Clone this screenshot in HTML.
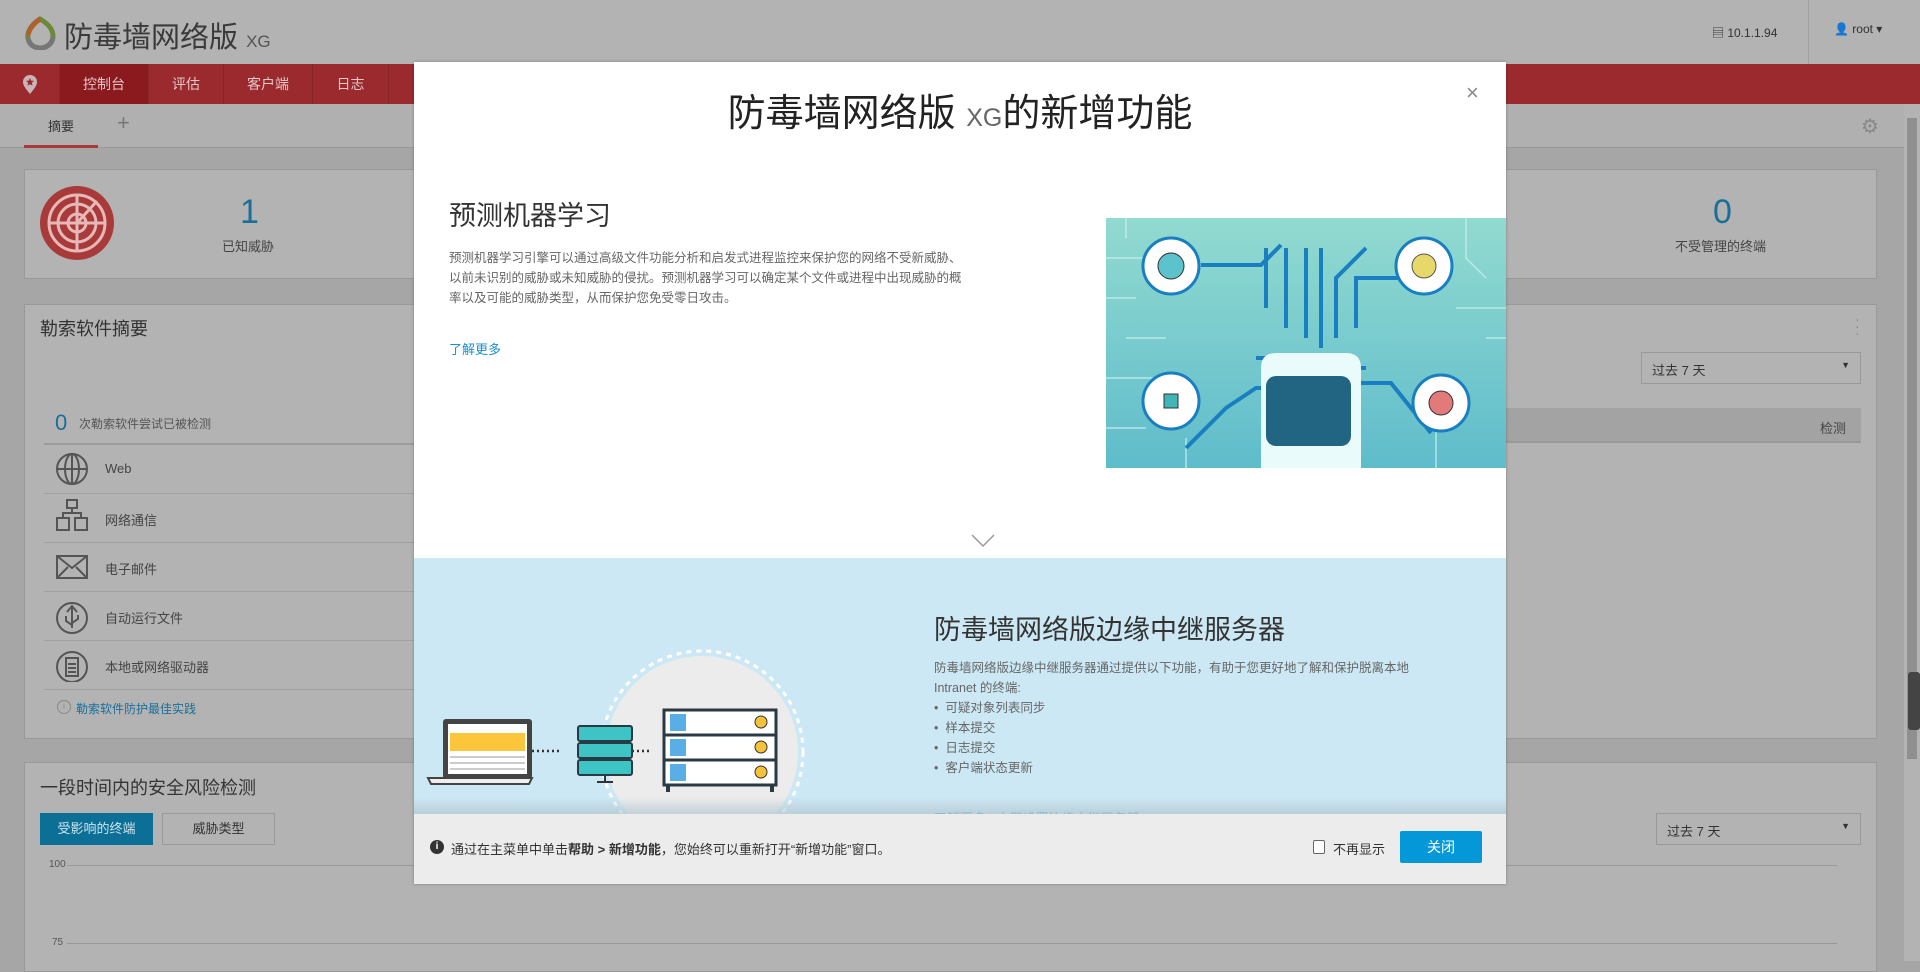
<!DOCTYPE html>
<html><head><meta charset="utf-8"><style>
*{box-sizing:border-box;margin:0;padding:0}
body{width:1920px;height:961px;overflow:hidden;background:#a6a6a6;font-family:"Liberation Sans","Noto Sans CJK SC",sans-serif;color:#3a3a3a;position:relative}
.abs{position:absolute}
.hdr{left:0;top:0;width:1920px;height:64px;background:#b3b3b3}
.nav{left:0;top:64px;width:1920px;height:40px;background:#9b2a2e}
.nav div{position:absolute;top:0;height:40px;line-height:40px;color:#e6c6c6;font-size:14px;text-align:center;border-right:1px solid #8a2428}
.sub{left:0;top:104px;width:1904px;height:44px;background:#b0b0b0;border-bottom:1px solid #9a9a9a}
.card{background:#b3b3b3;border:1px solid #999}
.row{left:44px;width:380px;height:49px;border-top:1px solid #a0a0a0}
.row span{position:absolute;left:61px;top:16px;font-size:13px;color:#444}
.modal{left:414px;top:62px;width:1092px;height:822px;background:#fff;overflow:hidden;box-shadow:0 0 3px rgba(0,0,0,.3)}
.p{font-size:12.5px;color:#666;line-height:20px}
</style></head><body>
<div class="abs hdr"></div>
<svg class="abs" style="left:23px;top:16px" width="34" height="34" viewBox="0 0 34 34"><path d="M17 3 C8 9 4 16 5 22 C6 29 12 32 17 32 C24 32 30 27 30 20 C30 13 24 7 17 3Z" fill="none" stroke="#6a8a3a" stroke-width="5"/><path d="M5 22 C6 29 12 32 17 32 C24 32 29 28 30 21" fill="none" stroke="#777" stroke-width="5"/><path d="M17 3 C10 8 6 14 5 19" fill="none" stroke="#b0602a" stroke-width="5"/></svg>
<div class="abs" style="left:64px;top:14px;font-size:29px;color:#3a3a3a">防毒墙网络版 <span style="font-size:17px;color:#555">XG</span></div>
<div class="abs" style="left:1712px;top:24px;font-size:12px;color:#333">&#9636; 10.1.1.94</div>
<div class="abs" style="left:1808px;top:0;width:1px;height:64px;background:#a0a0a0"></div>
<div class="abs" style="left:1834px;top:22px;font-size:12px;color:#333">&#128100; root &#9662;</div>
<div class="abs nav">
<div style="left:0;width:60px"></div>
<div style="left:60px;width:89px;background:#8a1a1e">控制台</div>
<div style="left:149px;width:75px">评估</div>
<div style="left:224px;width:89px">客户端</div>
<div style="left:313px;width:76px">日志</div>
</div>
<svg class="abs" style="left:22px;top:75px" width="16" height="20" viewBox="0 0 16 20"><path d="M8 19C3 13 1 10 1 7a7 7 0 0 1 14 0c0 3-2 6-7 12z" fill="#c9b5b5"/><path d="M8 3l1.2 2.6 2.8.3-2.1 1.9.6 2.8L8 9.2 5.5 10.6l.6-2.8L4 5.9l2.8-.3z" fill="#9b2a2e"/></svg>
<div class="abs sub"></div>
<div class="abs" style="left:48px;top:116px;font-size:13px;color:#333">摘要</div>
<div class="abs" style="left:24px;top:145px;width:74px;height:3px;background:#a83a3a"></div>
<div class="abs" style="left:117px;top:110px;font-size:22px;color:#777">+</div>
<div class="abs" style="left:1861px;top:114px;font-size:20px;color:#888">&#9881;</div>
<div class="abs" style="left:1904px;top:104px;width:16px;height:857px;background:#b3b3b3"></div>
<div class="abs" style="left:1907px;top:118px;width:10px;height:641px;background:#8f8f8f"></div>
<div class="abs" style="left:1908px;top:672px;width:12px;height:58px;background:#444;border-radius:3px"></div>

<div class="abs card" style="left:24px;top:169px;width:1853px;height:110px"></div>
<svg class="abs" style="left:39px;top:185px" width="76" height="76" viewBox="0 0 76 76"><circle cx="38" cy="38" r="37" fill="#a83a3a"/><g fill="none" stroke="#e8b8b8" stroke-width="3"><circle cx="38" cy="38" r="28"/><circle cx="38" cy="38" r="19"/><circle cx="38" cy="38" r="9"/><line x1="10" y1="38" x2="66" y2="38"/><line x1="38" y1="10" x2="38" y2="66"/><line x1="38" y1="38" x2="58" y2="16"/></g></svg>
<div class="abs" style="left:240px;top:193px;font-size:34px;color:#1a6f9a">1</div>
<div class="abs" style="left:222px;top:236px;font-size:13px;color:#444">已知威胁</div>
<div class="abs" style="left:1713px;top:193px;font-size:34px;color:#1a6f9a">0</div>
<div class="abs" style="left:1675px;top:236px;font-size:13px;color:#444">不受管理的终端</div>

<div class="abs card" style="left:24px;top:304px;width:1853px;height:435px"></div>
<div class="abs" style="left:40px;top:315px;font-size:18px;color:#333">勒索软件摘要</div>
<div class="abs" style="left:1855px;top:316px;font-size:14px;color:#888;line-height:7px">·<br>·<br>·</div>
<div class="abs" style="left:1641px;top:352px;width:220px;height:32px;border:1px solid #999;font-size:13px;padding:7px 10px;color:#333">过去 7 天<span style="float:right;font-size:9px">&#9660;</span></div>
<div class="abs" style="left:1500px;top:408px;height:35px;background:#a3a3a3;width:361px;border-bottom:2px solid #999"></div>
<div class="abs" style="left:1820px;top:418px;font-size:13px;color:#444">检测</div>
<div class="abs" style="left:55px;top:410px;font-size:22px;color:#1a6f9a">0</div>
<div class="abs" style="left:79px;top:415px;font-size:12px;color:#555">次勒索软件尝试已被检测</div>
<div class="abs row" style="top:443px;border-top:2px solid #9c9c9c"><span>Web</span></div>
<div class="abs row" style="top:493px"><span>网络通信</span></div>
<div class="abs row" style="top:542px"><span>电子邮件</span></div>
<div class="abs row" style="top:591px"><span>自动运行文件</span></div>
<div class="abs row" style="top:640px"><span>本地或网络驱动器</span></div>
<div class="abs" style="left:44px;top:689px;width:380px;border-top:1px solid #a0a0a0"></div>
<svg class="abs" style="left:55px;top:452px" width="34" height="230" viewBox="0 0 34 230" fill="none" stroke="#555" stroke-width="2"><circle cx="17" cy="17" r="15"/><ellipse cx="17" cy="17" rx="7" ry="15"/><line x1="2" y1="17" x2="32" y2="17"/><line x1="17" y1="2" x2="17" y2="32"/><rect x="12" y="48" width="10" height="8"/><rect x="2" y="66" width="12" height="12"/><rect x="20" y="66" width="12" height="12"/><path d="M17 56v5M8 66v-5h18v5"/><rect x="2" y="104" width="30" height="22"/><path d="M2 104l15 12 15-12M2 126l11-11M32 126l-11-11"/><circle cx="17" cy="166" r="15"/><path d="M17 154v22M12 160l5-6 5 6M11 164v5l6 4M23 163v4l-6 4"/><circle cx="17" cy="215" r="15"/><rect x="11" y="206" width="12" height="18"/><path d="M13 212h8M13 216h8M13 220h8"/></svg>
<div class="abs" style="left:57px;top:700px;width:14px;height:14px;border:1px solid #888;border-radius:50%;font-size:9px;text-align:center;color:#888">i</div>
<div class="abs" style="left:76px;top:700px;font-size:12px;color:#1a6f9a">勒索软件防护最佳实践</div>

<div class="abs card" style="left:24px;top:762px;width:1853px;height:210px"></div>
<div class="abs" style="left:40px;top:774px;font-size:18px;color:#333">一段时间内的安全风险检测</div>
<div class="abs" style="left:40px;top:813px;width:113px;height:32px;background:#0b6f96;color:#cfe3ec;font-size:13px;text-align:center;line-height:32px">受影响的终端</div>
<div class="abs" style="left:162px;top:813px;width:113px;height:32px;border:1px solid #999;color:#333;font-size:13px;text-align:center;line-height:30px">威胁类型</div>
<div class="abs" style="left:1656px;top:813px;width:205px;height:32px;border:1px solid #999;font-size:13px;padding:7px 10px;color:#333">过去 7 天<span style="float:right;font-size:9px">&#9660;</span></div>
<div class="abs" style="left:49px;top:859px;font-size:10px;color:#555">100</div>
<div class="abs" style="left:67px;top:865px;width:1770px;border-top:1px solid #999"></div>
<div class="abs" style="left:52px;top:937px;font-size:10px;color:#555">75</div>
<div class="abs" style="left:67px;top:943px;width:1770px;border-top:1px solid #999"></div>

<div class="abs modal">
<div class="abs" style="left:0;top:20px;width:1092px;text-align:center;font-size:38px;color:#222">防毒墙网络版 <span style="font-size:25px;color:#666">XG</span>的新增功能</div>
<div class="abs" style="left:1052px;top:18px;font-size:22px;color:#888">&#215;</div>
<div class="abs" style="left:35px;top:132px;font-size:27px;color:#333">预测机器学习</div>
<div class="abs p" style="left:35px;top:186px;width:515px">预测机器学习引擎可以通过高级文件功能分析和启发式进程监控来保护您的网络不受新威胁、以前未识别的威胁或未知威胁的侵扰。预测机器学习可以确定某个文件或进程中出现威胁的概率以及可能的威胁类型，从而保护您免受零日攻击。</div>
<div class="abs" style="left:35px;top:277px;font-size:13px;color:#1a8fd1">了解更多</div>
<svg class="abs" style="left:692px;top:156px" width="400" height="250" viewBox="0 0 400 250">
<defs><linearGradient id="g" x1="0" y1="0" x2="0" y2="1"><stop offset="0" stop-color="#92dad0"/><stop offset="1" stop-color="#5fbccb"/></linearGradient></defs>
<rect width="400" height="250" fill="url(#g)"/>
<g stroke="#c8efec" stroke-width="1.5" fill="none" opacity=".8"><path d="M0 40h40l20 20M0 80h30M0 160h50l20 20M0 210h40M360 0v40l20 20M330 250v-40l20-20M380 120h20M350 90h50M20 0v20M80 250v-30M60 120h-40"/></g>
<g stroke="#1a7fc0" stroke-width="4" fill="none"><path d="M95 47h60l20-20M160 90v-60M180 110v-80M200 120v-90M215 130v-100M230 120v-60l30-30M250 110v-50h50l25-15M190 140l-40 0M190 150h70M200 170l-50 0l-30 20l-40 40M215 165h70l40 50M210 160v90M225 170h10v60"/></g>
<path d="M155 250v-100q0-15 15-15h70q15 0 15 15v100z" fill="#eafbfb"/>
<rect x="160" y="158" width="85" height="70" rx="10" fill="#216583"/>
<g fill="#fff" stroke="#1a7fc0" stroke-width="3"><circle cx="65" cy="48" r="28"/><circle cx="318" cy="48" r="28"/><circle cx="65" cy="183" r="28"/><circle cx="335" cy="185" r="28"/></g>
<circle cx="65" cy="48" r="13" fill="#5cc3cc" stroke="#333"/><circle cx="318" cy="48" r="12" fill="#e8d86a" stroke="#555"/><rect x="58" y="176" width="14" height="14" fill="#3fb5b5" stroke="#333"/><circle cx="335" cy="185" r="12" fill="#e27a7a" stroke="#333"/>
</svg>
<svg class="abs" style="left:557px;top:472px" width="24" height="14" viewBox="0 0 24 14"><path d="M1 1l11 11 11-11" fill="none" stroke="#999" stroke-width="1.5"/></svg>
<div class="abs" style="left:0;top:496px;width:1092px;height:270px;background:#cce8f4"></div>
<svg class="abs" style="left:0;top:578px" width="500" height="190" viewBox="414 640 500 190">
<circle cx="702" cy="752" r="96" fill="#ececec"/><circle cx="702" cy="752" r="101" fill="none" stroke="#fff" stroke-width="3" stroke-dasharray="5 5"/>
<rect x="443" y="719" width="89" height="60" rx="3" fill="#444"/><rect x="448" y="724" width="79" height="50" fill="#fff"/><rect x="450" y="733" width="75" height="18" fill="#fbc53c"/><path d="M450 757h75M450 763h75M450 769h75" stroke="#ccc" stroke-width="2"/><path d="M428 778h104l-3 6h-98z" fill="#eee" stroke="#444" stroke-width="2"/>
<path d="M532 751h30M632 751h20" stroke="#333" stroke-width="2.5" stroke-dasharray="2 3"/>
<g fill="#3fc4c6" stroke="#2a3a44" stroke-width="2"><rect x="578" y="726" width="54" height="15" rx="2"/><rect x="578" y="743" width="54" height="15" rx="2"/><rect x="578" y="760" width="54" height="15" rx="2"/></g>
<path d="M605 776v6M597 782h16" stroke="#333" stroke-width="2"/>
<g fill="#fff" stroke="#2a3a44" stroke-width="3"><rect x="664" y="710" width="112" height="25"/><rect x="664" y="735" width="112" height="25"/><rect x="664" y="760" width="112" height="25"/></g>
<g fill="#5aaee6"><rect x="670" y="714" width="16" height="17"/><rect x="670" y="739" width="16" height="17"/><rect x="670" y="764" width="16" height="17"/></g>
<g fill="#f5c23a" stroke="#333"><circle cx="761" cy="722" r="6"/><circle cx="761" cy="747" r="6"/><circle cx="761" cy="772" r="6"/></g>
<path d="M668 786v6M772 786v6" stroke="#2a3a44" stroke-width="4"/>
</svg>
<div class="abs" style="left:520px;top:546px;font-size:27px;color:#333">防毒墙网络版边缘中继服务器</div>
<div class="abs p" style="left:520px;top:596px;width:520px">防毒墙网络版边缘中继服务器通过提供以下功能，有助于您更好地了解和保护脱离本地 Intranet 的终端:<br>•&nbsp; 可疑对象列表同步<br>•&nbsp; 样本提交<br>•&nbsp; 日志提交<br>•&nbsp; 客户端状态更新</div>
<div class="abs" style="left:520px;top:746px;font-size:13px;color:#1a8fd1">了解更多 | 立即设置边缘中继服务器</div>
<div class="abs" style="left:0;top:735px;width:1092px;height:18px;background:linear-gradient(rgba(204,232,244,0),rgba(180,200,210,.8))"></div>
<div class="abs" style="left:0;top:752px;width:1092px;height:70px;background:#ececec"></div>
<div class="abs" style="left:16px;top:778px;width:14px;height:14px;border-radius:50%;background:#333;color:#fff;font-size:10px;font-weight:bold;text-align:center;line-height:14px">i</div>
<div class="abs" style="left:37px;top:777px;font-size:13px;color:#333">通过在主菜单中单击<b>帮助 &gt; 新增功能</b>，您始终可以重新打开“新增功能”窗口。</div>
<div class="abs" style="left:899px;top:778px;width:12px;height:14px;border:1px solid #666;border-radius:2px;background:#fff"></div>
<div class="abs" style="left:919px;top:777px;font-size:13px;color:#333">不再显示</div>
<div class="abs" style="left:986px;top:769px;width:82px;height:32px;background:#0598d8;border-radius:2px;color:#fff;font-size:14px;text-align:center;line-height:32px">关闭</div>
</div>
</body></html>
